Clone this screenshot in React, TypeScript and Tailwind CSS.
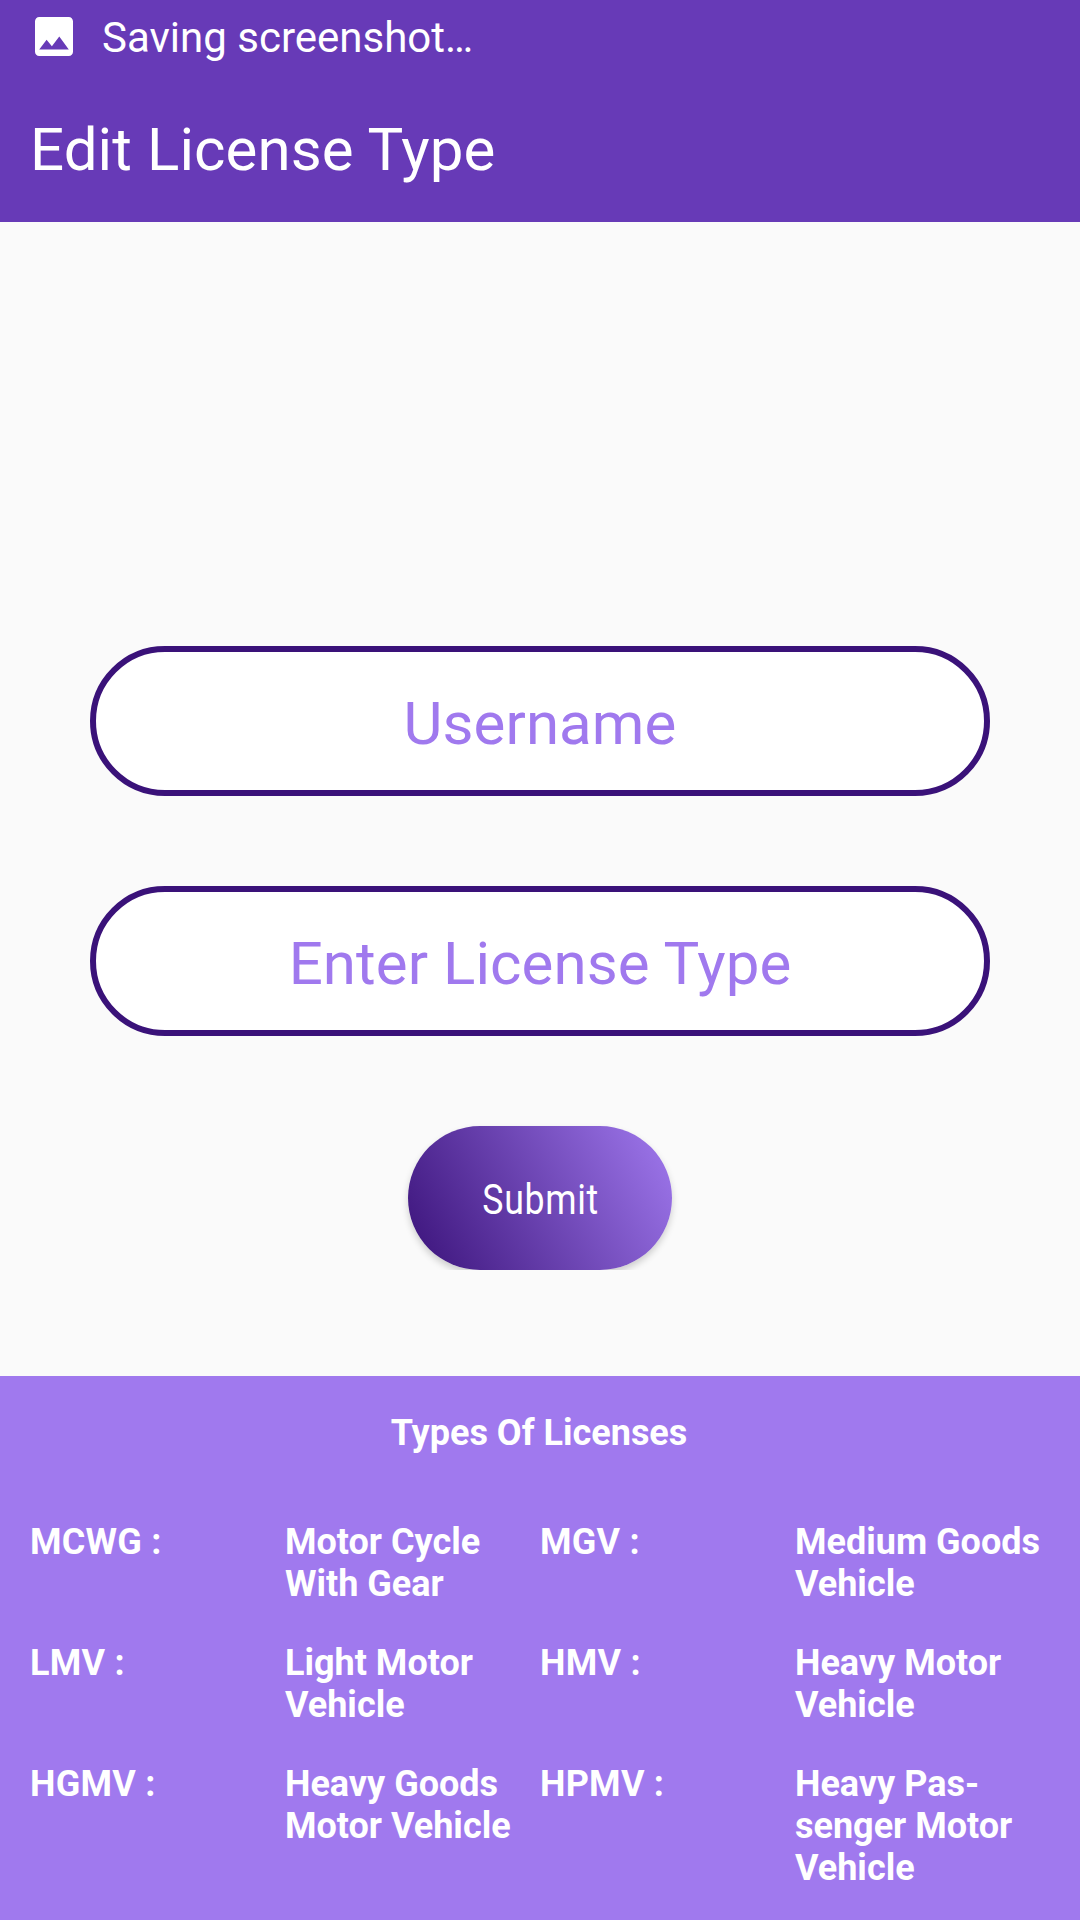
const licenses = [
  ["MCWG :", "Motor Cycle\nWith Gear", "MGV :", "Medium Goods\nVehicle"],
  ["LMV :", "Light Motor\nVehicle", "HMV :", "Heavy Motor\nVehicle"],
  ["HGMV :", "Heavy Goods\nMotor Vehicle", "HPMV :", "Heavy Pas-\nsenger Motor\nVehicle"],
];

function Field({ label }: { label: string }) {
  return (
    <div className="flex h-[150px] w-[900px] items-center justify-center rounded-full border-[6px] border-[#3a1279] bg-white pt-1.5 text-[60px] leading-[70px] tracking-[0.08px] text-[#a079ee]">
      {label}
    </div>
  );
}

export default function App() {
  return (
    <div className="flex h-[1920px] w-[1080px] flex-col overflow-hidden bg-[#fafafa] font-['Roboto',sans-serif]">
      <header className="h-[222px] bg-[#673ab7] text-white">
        <div className="flex h-[74px] items-center pl-[35px]">
          <svg className="mb-[2px] h-[39px] w-[38px]" viewBox="3 3 18 18" preserveAspectRatio="none" fill="currentColor">
            <path d="M21 19V5c0-1.100-.9-2-2-2H5c-1.100 0-2 .9-2 2v14c0 1.100.9 2 2 2h14c1.100 0 2-.9 2-2zM8.500 13.500l2.500 3.010L14.500 12l4.500 6H5l3.500-4.500z" />
          </svg>
          <span className="ml-[29px] text-[42px] leading-[49px]">Saving screenshot…</span>
        </div>
        <h1 className="pt-[41px] pl-[30px] text-[60px] leading-[70px] tracking-[0.1px]">Edit License Type</h1>
      </header>
      <main className="flex h-[1154px] flex-col items-center pt-[424px]">
        <Field label="Username" />
        <div className="mt-[90px]">
          <Field label="Enter License Type" />
        </div>
        {/* The button's shadow is cut off level with its bottom edge */}
        <div className="mt-[80px] overflow-hidden px-5 pt-[10px]">
          <button className="block h-[144px] w-[264px] rounded-full bg-[linear-gradient(61.4deg,#3a1279,#a079ee)] pt-0.5 pl-[2px] text-[42px] text-white shadow-[0_4px_7px_rgba(0,0,0,0.18)]">
            <span className="inline-block scale-x-[0.85] tracking-[0.8px]">Submit</span>
          </button>
        </div>
      </main>
      <section className="h-[544px] bg-[#a079ee] pt-[36px] text-[36px] leading-[42px] font-bold text-white">
        <h2 className="pr-0.5 text-center">Types Of Licenses</h2>
        <div className="mt-[67px] flex flex-col gap-[37px] pl-[30px]">
          {licenses.map((row) => (
            <div key={row[0]} className="grid grid-cols-[255px_255px_255px_255px]">
              {row.map((cell) => (
                <span key={cell} className={cell.endsWith(":") ? "whitespace-pre tracking-[0.25px]" : "whitespace-pre"}>{cell}</span>
              ))}
            </div>
          ))}
        </div>
      </section>
    </div>
  );
}
